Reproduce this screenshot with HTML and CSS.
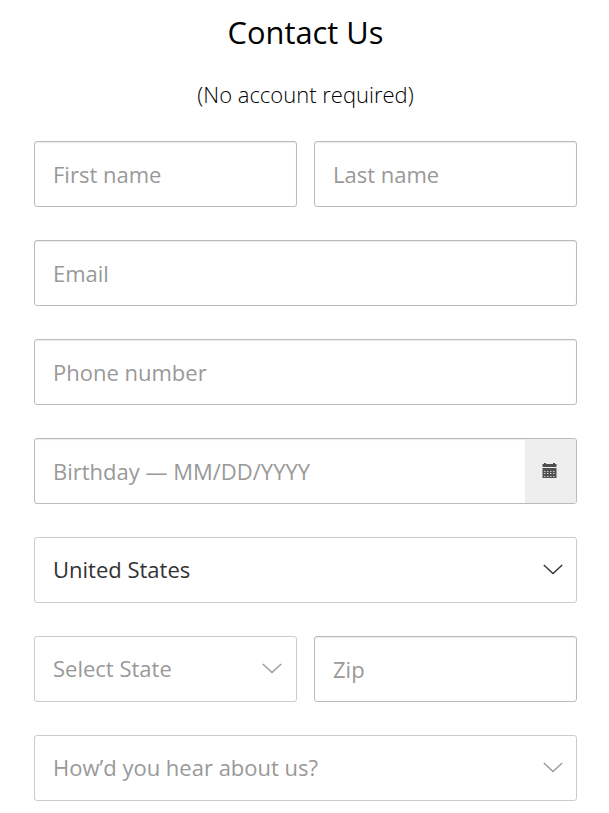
FILE: index.html
```html
<!DOCTYPE html>
<html lang="en">
<head>
<meta charset="utf-8">
<title>Contact Us</title>
<link rel="stylesheet" href="styles.css">
</head>
<body>
<main class="contact">
  <h1 class="title">Contact Us</h1>
  <p class="subtitle">(No account required)</p>
  <form class="form">
    <div class="row">
      <div class="field">First name</div>
      <div class="field">Last name</div>
    </div>
    <div class="field">Email</div>
    <div class="field">Phone number</div>
    <div class="field field-date">
      <span class="value">Birthday — MM/DD/YYYY</span>
      <span class="addon">
        <svg class="calendar" width="15" height="15" viewBox="0 0 15 15"><path fill="#505050" d="M.5 1H2V0h2v1h7V0h2v1h1.500v3H.5z"/><path fill="#505050" d="M.5 5h14v10H.5z"/><path stroke="#c8c8c8" stroke-dasharray="1.500 1.500" d="M2 8.500h11M2 10.500h11M2 13.500h11"/></svg>
      </span>
    </div>
    <div class="field select chosen"><span>United States</span><svg class="chevron" width="20" height="11" viewBox="0 0 20 11"><path d="M.8 1 10 9.500 19.200 1"/></svg></div>
    <div class="row">
      <div class="field select state"><span>Select State</span><svg class="chevron" width="20" height="11" viewBox="0 0 20 11"><path d="M.8 1 10 9.500 19.200 1"/></svg></div>
      <div class="field">Zip</div>
    </div>
    <div class="field select"><span>How’d you hear about us?</span><svg class="chevron" width="20" height="11" viewBox="0 0 20 11"><path d="M.8 1 10 9.500 19.200 1"/></svg></div>
  </form>
</main>
</body>
</html>
```
FILE: styles.css
```css
* { box-sizing: border-box; }
body { margin: 0; background: #fff; color: #000; font-family: "Open Sans", sans-serif; overflow: hidden; }
.contact { padding: 10px 32px 0 34px; }
.title { margin: 0; font-size: 30.800px; line-height: 44px; font-weight: 400; text-align: center; }
.subtitle { margin: 24px 0 0; font-size: 22px; line-height: 32px; font-weight: 300; text-align: center; }
.form { display: flex; flex-direction: column; gap: 33px; margin-top: 31px; }
.row { display: grid; grid-template-columns: 1fr 1fr; gap: 17px; }
.field { display: flex; align-items: center; height: 66px; padding: 0 18px; border: 1px solid #bbb; border-radius: 3px; box-shadow: inset 0 1px 1px rgba(0,0,0,.08); color: #999; font-size: 22px; line-height: 30px; white-space: nowrap; }
.field-date { padding-right: 0; justify-content: space-between; }
.addon { display: flex; align-items: center; justify-content: center; width: 51px; height: 64px; padding: 0 2px 1px 0; background: #eee; border-radius: 0 2px 2px 0; }
.select { justify-content: space-between; padding: 0 13px 2px 18px; border-color: #ccc; box-shadow: none; }
.state { padding-right: 14px; }
.chosen { color: #333; }
.chevron { fill: none; stroke: currentColor; stroke-width: 1.4; }
```
